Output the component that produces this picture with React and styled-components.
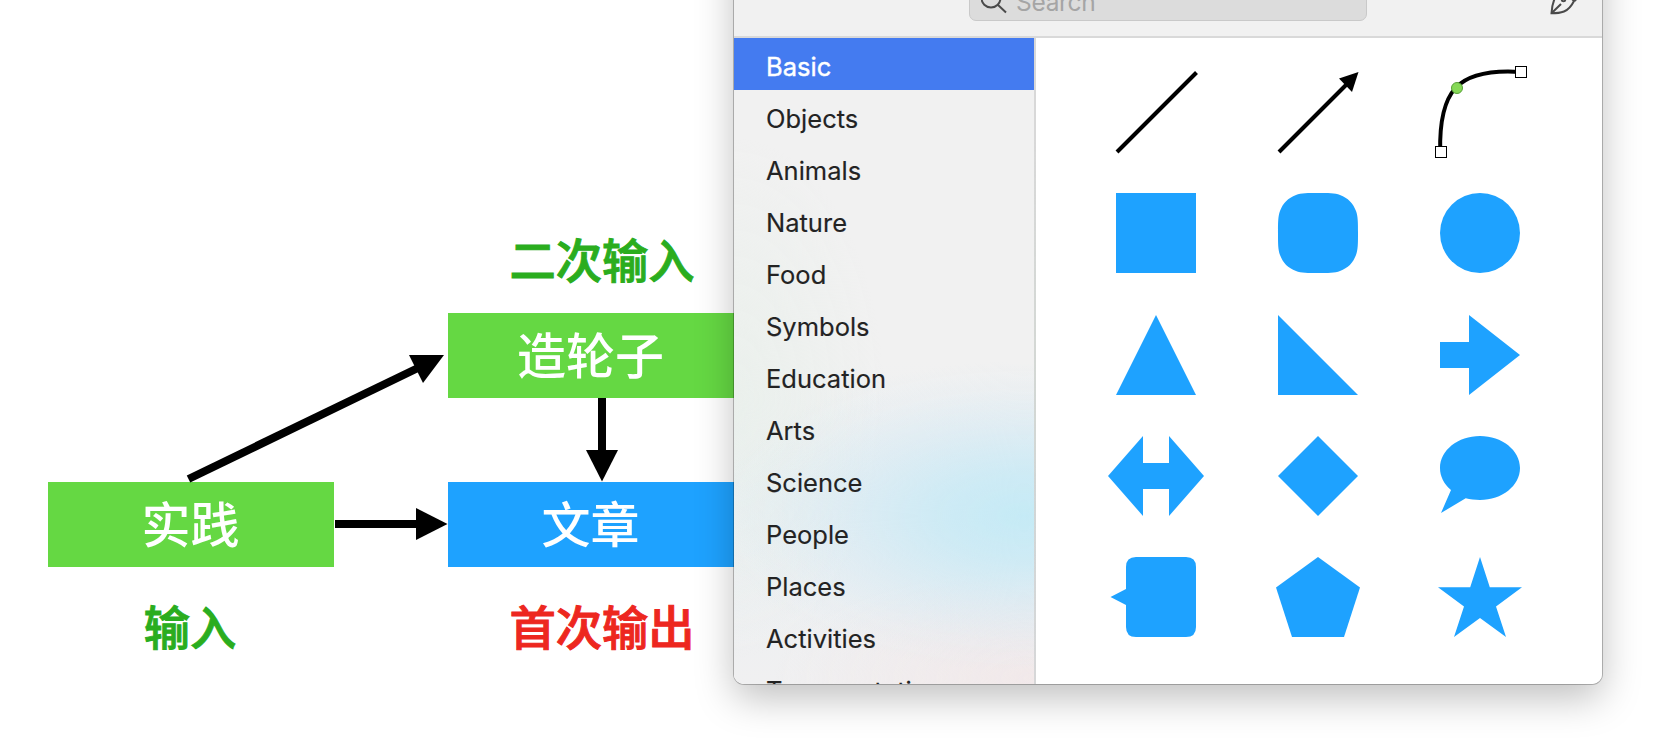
import React from "react";
import styled, { createGlobalStyle } from "styled-components";

const Global = createGlobalStyle`
  * { box-sizing: border-box; }
  html, body { margin: 0; height: 756px; overflow: hidden; background: #fff; }
`;

const Canvas = styled.main`
  position: relative;
  width: 1672px;
  height: 756px;
  overflow: hidden;
  background: #fff;
  font-family: Inter, "Noto Sans CJK SC", sans-serif;
`;

const Connectors = styled.svg`
  position: absolute;
  inset: 0;
`;

const Node = styled.div`
  position: absolute;
  left: ${(p) => p.$x}px;
  top: ${(p) => p.$y}px;
  width: 286px;
  height: 85px;
  padding-right: 1px;
  text-align: center;
  background: ${(p) => p.$color};
  color: #fff;
  font: 500 49px/79px "Noto Sans CJK SC", sans-serif;
`;

const Caption = styled.div`
  position: absolute;
  left: ${(p) => p.$x}px;
  top: ${(p) => p.$y}px;
  width: 286px;
  text-align: center;
  color: ${(p) => p.$color};
  font: 500 46.3px/60px "Noto Sans CJK SC", sans-serif;
  -webkit-text-stroke: 1px ${(p) => p.$color};
`;

const Window = styled.section`
  position: absolute;
  left: 734px;
  top: -60px;
  width: 868px;
  height: 744px;
  display: flex;
  flex-direction: column;
  overflow: hidden;
  border-radius: 10px;
  background: #fff;
`;

const WindowShadow = styled.div`
  position: absolute;
  left: 734px;
  top: -60px;
  width: 868px;
  height: 744px;
  border-radius: 10px;
  box-shadow: 0 0 0 1px rgba(0, 0, 0, 0.24), 0 14px 38px rgba(0, 0, 0, 0.25);
`;

const Toolbar = styled.header`
  flex: none;
  height: 98px;
  display: flex;
  align-items: flex-end;
  padding: 0 23px 15px 235px;
  background: #f1f1f1;
  border-bottom: 2px solid #d9d9d9;
`;

const SearchField = styled.div`
  width: 398px;
  height: 44px;
  display: flex;
  align-items: center;
  padding-left: 11px;
  gap: 8px;
  border: 1px solid #c9c9c9;
  border-radius: 7px;
  background: #dcdcdc;
  color: #a5a5a5;
  font-size: 24.5px;
  line-height: 44px;
`;

const SearchLabel = styled.span`
  padding-top: 6px;
  letter-spacing: -0.3px;
`;

const PenButton = styled.div`
  margin-left: auto;
  width: 32px;
  height: 36px;
`;

const Body = styled.div`
  flex: 1;
  min-height: 0;
  display: flex;
`;

const Sidebar = styled.nav`
  width: 302px;
  flex: none;
  overflow: hidden;
  border-right: 2px solid rgba(0, 0, 0, 0.1);
  background:
    radial-gradient(ellipse 310px 155px at 290px 478px, rgba(193, 234, 246, 0.9), rgba(195, 233, 246, 0.72) 28%, rgba(198, 231, 246, 0.36) 58%, rgba(200, 230, 246, 0.1) 82%, rgba(200, 230, 246, 0) 100%),
    radial-gradient(ellipse 260px 110px at 300px 640px, rgba(242, 231, 232, 0.8), rgba(242, 232, 234, 0) 100%),
    radial-gradient(ellipse 150px 260px at 0 360px, rgba(232, 240, 234, 0.7), rgba(236, 240, 238, 0) 100%),
    linear-gradient(#f1f1f1 50%, #ebeff2 72%, #f0f0f1 100%);
`;

const Category = styled.div`
  height: 52px;
  padding-left: 32px;
  font-size: 25.5px;
  line-height: 57px;
  color: ${(p) => (p.$active ? "#fff" : "#232323")};
  background: ${(p) => (p.$active ? "#447bf0" : "transparent")};
  -webkit-text-stroke: ${(p) => (p.$active ? "0.4px #fff" : "0.15px #232323")};
`;

const ShapeGrid = styled.div`
  flex: 1;
  display: grid;
  grid-template-columns: repeat(3, 162px);
  grid-auto-rows: 121.33px;
  align-content: start;
  padding: 13.5px 0 0 39px;
`;

const ShapeCell = styled.div`
  display: flex;
  align-items: center;
  justify-content: center;
`;

const ShapeIcon = styled.svg`
  width: 100px;
  height: 100px;
  display: block;
  fill: #1ea2ff;
`;

const categories = [
  "Basic", "Objects", "Animals", "Nature", "Food", "Symbols", "Education",
  "Arts", "Science", "People", "Places", "Activities", "Transportation",
];

const ink = { fill: "none", stroke: "#000", strokeWidth: 4 };

const shapes = [
  <path d="M1 80 80.5.5" {...ink} />,
  <>
    <path d="M1 80 69 12" {...ink} />
    <path d="M80.5 0 61 6.500 74 20z" fill="#000" />
  </>,
  <>
    <path d="M.2 80C-1.200 20 16-4 80 0" {...ink} />
    <rect x="-4.5" y="74.5" width="11" height="11" fill="#fff" stroke="#000" />
    <rect x="75.5" y="-5.5" width="11" height="11" fill="#fff" stroke="#000" />
    <circle cx="17" cy="16" r="5.5" fill="#86d957" stroke="#57a038" />
  </>,
  <rect width="80" height="80" />,
  <path d="M40 0C50 0 57 0 62 2 70 5 75 10 78 18 80 23 80 30 80 40S80 57 78 62C75 70 70 75 62 78 57 80 50 80 40 80S23 80 18 78C10 75 5 70 2 62 0 57 0 50 0 40S0 23 2 18C5 10 10 5 18 2 23 0 30 0 40 0z" />,
  <circle cx="40" cy="40" r="40" />,
  <path d="M40 0 80 80H0z" />,
  <path d="M0 0 80 80H0z" />,
  <path d="M29 0 80 40 29 80V53H0V27H29z" />,
  <path d="M27 0V27H53V0L88 40 53 80V53H27V80L-8 40z" />,
  <path d="M40 0 80 40 40 80 0 40z" />,
  <path d="M40 0C62 0 80 14.300 80 32S62 64 40 64C35 64 30 63.500 25.700 62.300L1 77 11 54C4 48 0 40.500 0 32 0 14.300 18 0 40 0z" />,
  <path d="M20 0H70Q80 0 80 10V70Q80 80 70 80H20Q10 80 10 70V48L-5.500 40 10 32V10Q10 0 20 0z" />,
  <path d="M40 0 82 30.500 66 80H14L-2 30.500z" />,
  <path d="M40 0 49.800 30.300H82L56 49.500 66 80 40 61 14 80 24 49.500-2 30.300H30.200z" />,
];

export default function App() {
  return (
    <Canvas>
      <Global />
      <Node $x={48} $y={482} $color="#65d843">实践</Node>
      <Node $x={448} $y={313} $color="#65d843">造轮子</Node>
      <Node $x={448} $y={482} $color="#1ea2ff">文章</Node>
      <Caption $x={47} $y={595} $color="#2aad1e">输入</Caption>
      <Caption $x={459} $y={228} $color="#2aad1e">二次输入</Caption>
      <Caption $x={459} $y={595} $color="#ed271f">首次输出</Caption>
      <Connectors width="1672" height="756">
        <g stroke="#000" strokeWidth="8">
          <path d="M188.500 479 420 367" />
          <path d="M335 524H420" />
          <path d="M602 398V455" />
        </g>
        <path d="M444 355H409L423 383z" />
        <path d="M416 508V540L447.500 524z" />
        <path d="M586 450H618L602 481.500z" />
      </Connectors>
      <WindowShadow />
      <Window>
        <Toolbar>
          <SearchField>
            <svg width="27" height="30" viewBox="0 0 27 30" fill="none" stroke="#4a4a4a" strokeWidth="2">
              <circle cx="10" cy="14" r="9.500" />
              <path d="M16.500 20.500 25 28.500" />
            </svg>
            <SearchLabel>Search</SearchLabel>
          </SearchField>
          <PenButton>
            <svg width="32" height="36" viewBox="0 0 32 36" fill="none" stroke="#4a4a4a" strokeWidth="2">
              <path d="M4.500 28.300C4.800 23 5.500 18 8 13L16 5 27 16C24.500 21 22 24.500 17 26.500 13 28 8.500 28.300 4.500 28.300z" />
              <path d="M4.500 28.300 14 19M16 5 19 2 30 13.500 27.500 16" />
              <circle cx="16.500" cy="14.500" r="1.800" />
            </svg>
          </PenButton>
        </Toolbar>
        <Body>
          <Sidebar>
            {categories.map((name, i) => (
              <Category key={name} $active={i === 0}>{name}</Category>
            ))}
          </Sidebar>
          <ShapeGrid>
            {shapes.map((shape, i) => (
              <ShapeCell key={i}>
                <ShapeIcon viewBox="-10 -10 100 100">{shape}</ShapeIcon>
              </ShapeCell>
            ))}
          </ShapeGrid>
        </Body>
      </Window>
    </Canvas>
  );
}
